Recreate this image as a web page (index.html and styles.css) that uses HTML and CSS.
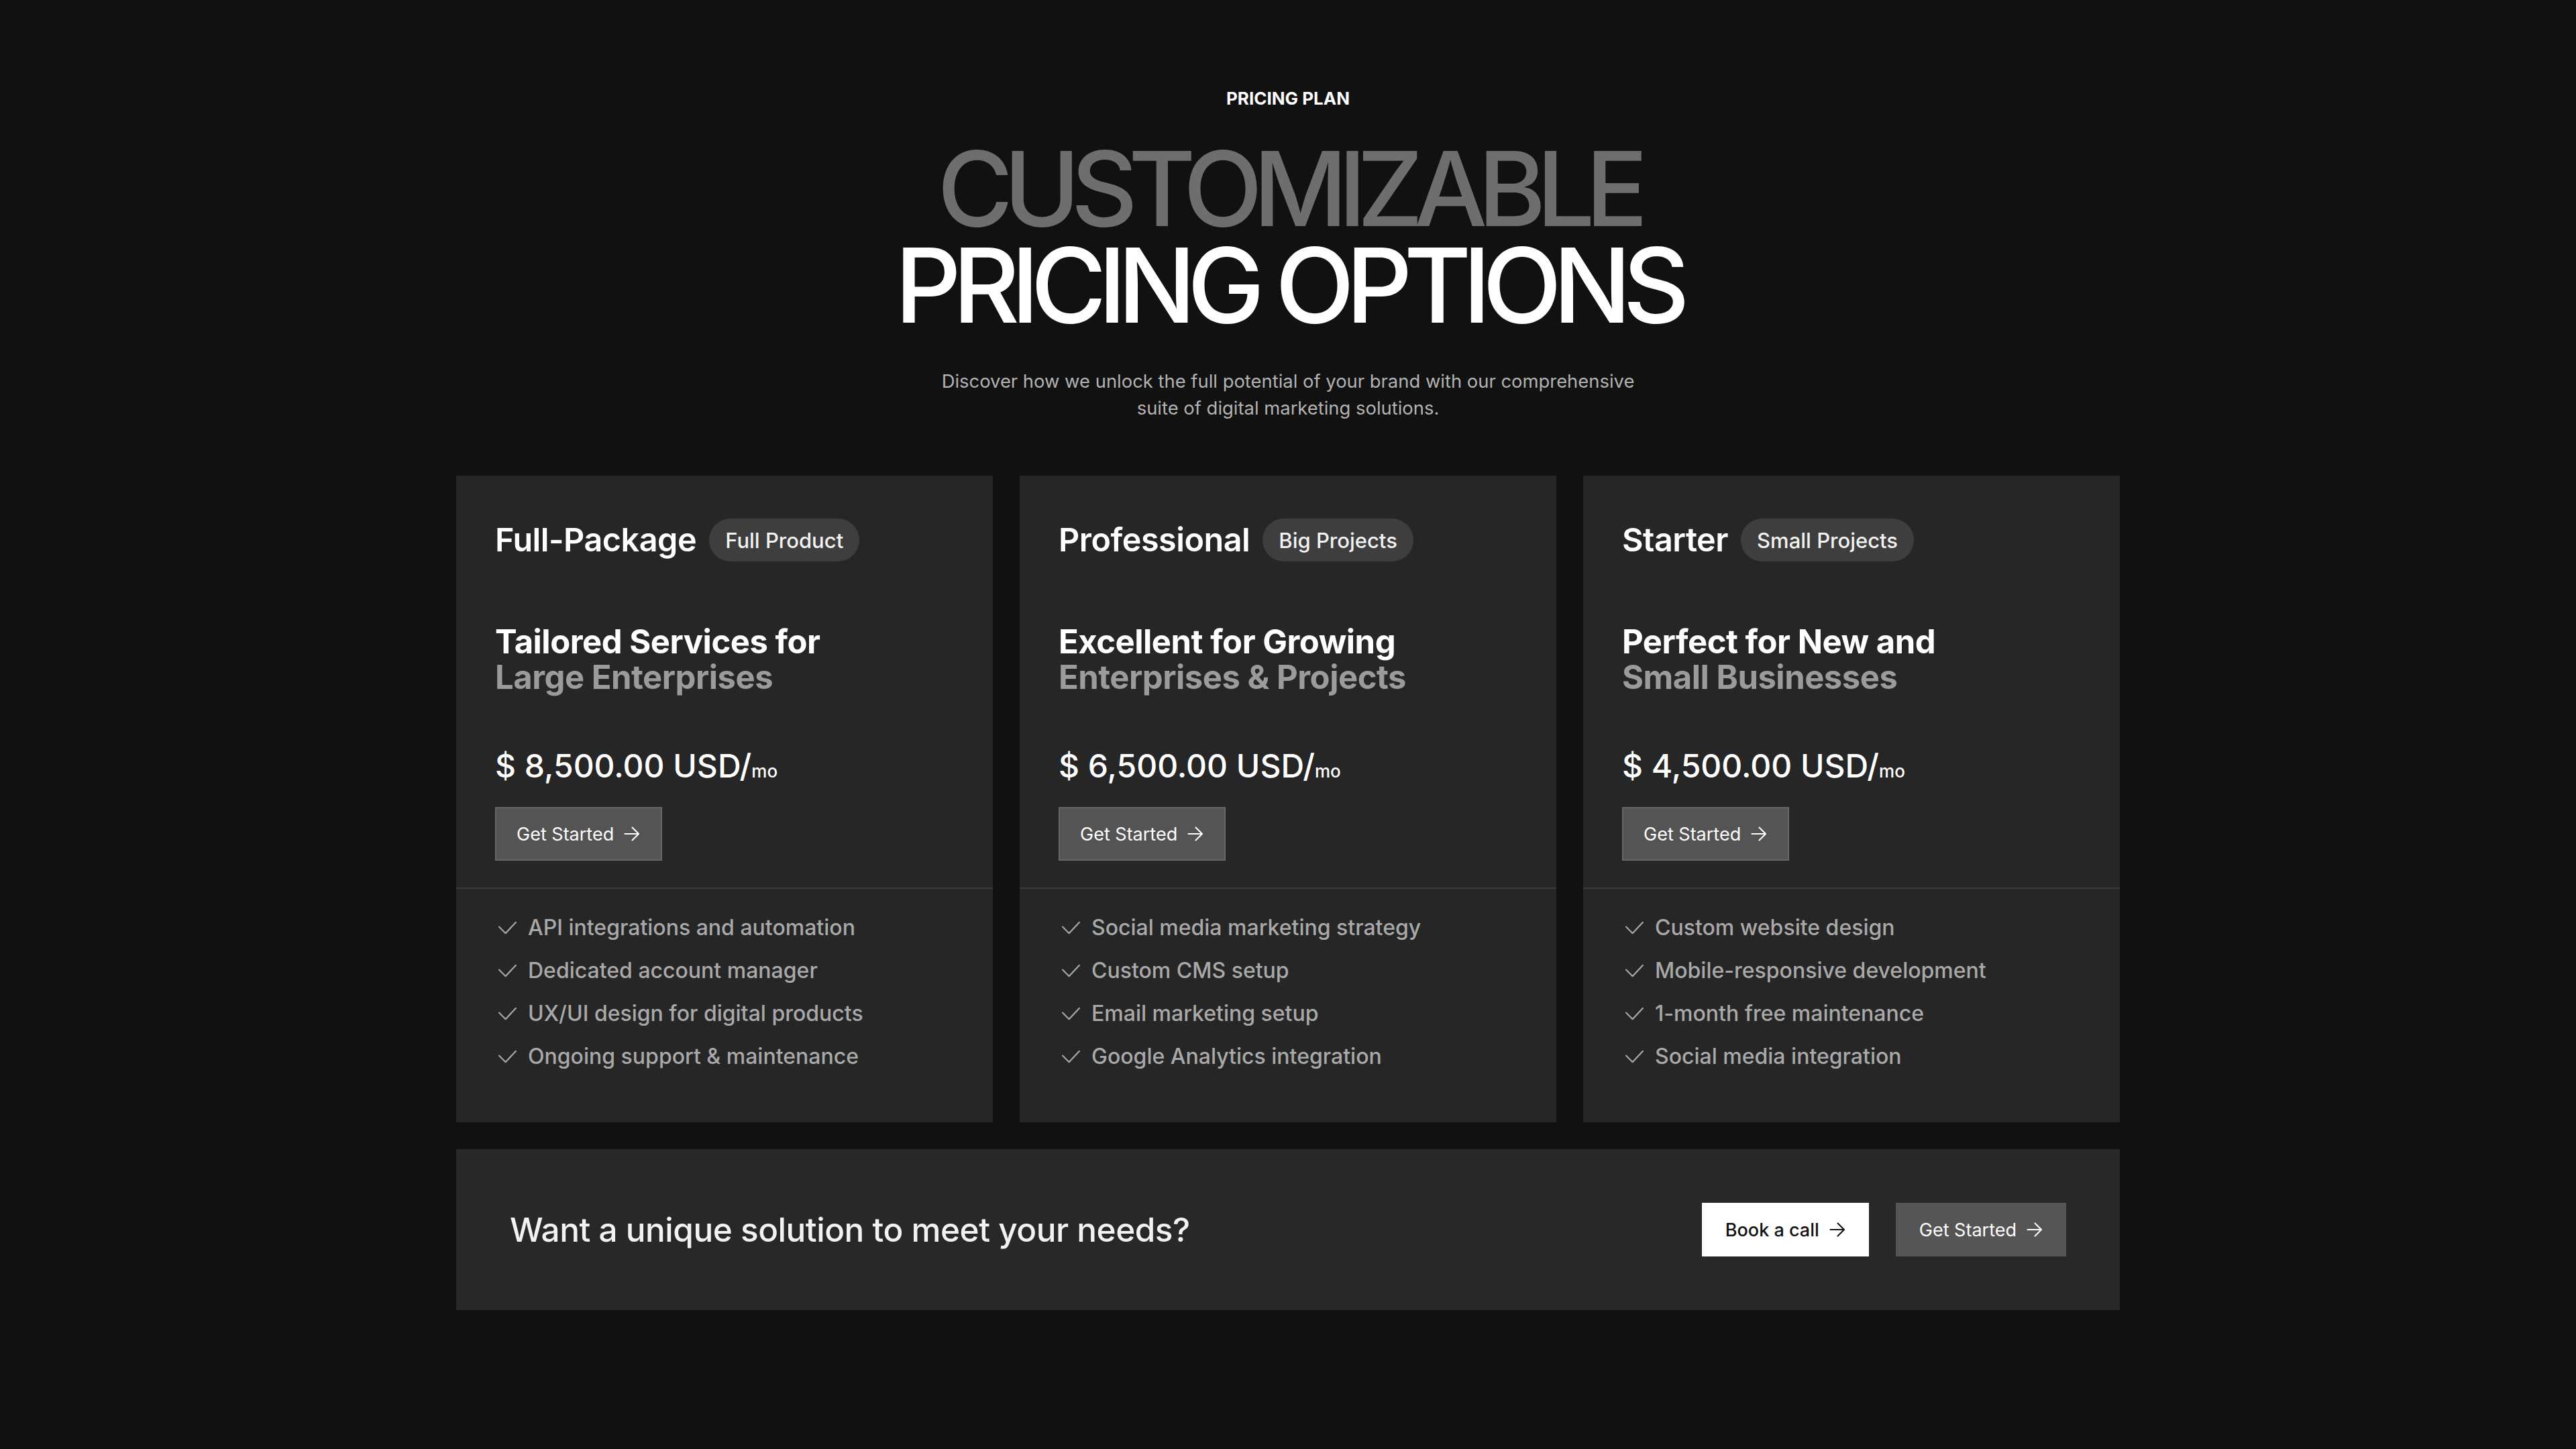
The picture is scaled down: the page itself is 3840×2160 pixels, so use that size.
FILE: index.html
```html
<!DOCTYPE html>
<html lang="en">
<head>
<meta charset="utf-8">
<title>Pricing Plan</title>
<link rel="stylesheet" href="styles.css">
</head>
<body>
<section class="pricing">
  <p class="eyebrow">PRICING PLAN</p>
  <h1 class="headline">
    <span class="headline-muted">CUSTOMIZABLE</span>
    <span class="headline-bright">PRICING OPTIONS</span>
  </h1>
  <p class="intro">Discover how we unlock the full potential of your brand with our comprehensive suite of digital marketing solutions.</p>

  <div class="plans">
    <article class="plan">
      <div class="plan-top">
        <div class="plan-head">
          <h2 class="plan-name">Full-Package</h2>
          <span class="plan-badge">Full Product</span>
        </div>
        <h3 class="plan-tagline">Tailored Services for<br><span class="muted">Large Enterprises</span></h3>
        <p class="plan-price">$ 8,500.00 USD/<span class="per">mo</span></p>
        <a class="btn btn-grey" href="#">Get Started <svg class="arrow" viewBox="0 0 24 24"><path d="M1.5 12H22M12.5 2.5L22 12l-9.5 9.5"/></svg></a>
      </div>
      <ul class="plan-features">
        <li><svg class="check" viewBox="0 0 28 20"><path d="M1 8.5l10 10L27 1.5"/></svg>API integrations and automation</li>
        <li><svg class="check" viewBox="0 0 28 20"><path d="M1 8.5l10 10L27 1.5"/></svg>Dedicated account manager</li>
        <li><svg class="check" viewBox="0 0 28 20"><path d="M1 8.5l10 10L27 1.5"/></svg>UX/UI design for digital products</li>
        <li><svg class="check" viewBox="0 0 28 20"><path d="M1 8.5l10 10L27 1.5"/></svg>Ongoing support &amp; maintenance</li>
      </ul>
    </article>

    <article class="plan">
      <div class="plan-top">
        <div class="plan-head">
          <h2 class="plan-name">Professional</h2>
          <span class="plan-badge">Big Projects</span>
        </div>
        <h3 class="plan-tagline">Excellent for Growing<br><span class="muted">Enterprises &amp; Projects</span></h3>
        <p class="plan-price">$ 6,500.00 USD/<span class="per">mo</span></p>
        <a class="btn btn-grey" href="#">Get Started <svg class="arrow" viewBox="0 0 24 24"><path d="M1.5 12H22M12.5 2.5L22 12l-9.5 9.5"/></svg></a>
      </div>
      <ul class="plan-features">
        <li><svg class="check" viewBox="0 0 28 20"><path d="M1 8.5l10 10L27 1.5"/></svg>Social media marketing strategy</li>
        <li><svg class="check" viewBox="0 0 28 20"><path d="M1 8.5l10 10L27 1.5"/></svg>Custom CMS setup</li>
        <li><svg class="check" viewBox="0 0 28 20"><path d="M1 8.5l10 10L27 1.5"/></svg>Email marketing setup</li>
        <li><svg class="check" viewBox="0 0 28 20"><path d="M1 8.5l10 10L27 1.5"/></svg>Google Analytics integration</li>
      </ul>
    </article>

    <article class="plan">
      <div class="plan-top">
        <div class="plan-head">
          <h2 class="plan-name">Starter</h2>
          <span class="plan-badge">Small Projects</span>
        </div>
        <h3 class="plan-tagline">Perfect for New and<br><span class="muted">Small Businesses</span></h3>
        <p class="plan-price">$ 4,500.00 USD/<span class="per">mo</span></p>
        <a class="btn btn-grey" href="#">Get Started <svg class="arrow" viewBox="0 0 24 24"><path d="M1.5 12H22M12.5 2.5L22 12l-9.5 9.5"/></svg></a>
      </div>
      <ul class="plan-features">
        <li><svg class="check" viewBox="0 0 28 20"><path d="M1 8.5l10 10L27 1.5"/></svg>Custom website design</li>
        <li><svg class="check" viewBox="0 0 28 20"><path d="M1 8.5l10 10L27 1.5"/></svg>Mobile-responsive development</li>
        <li><svg class="check" viewBox="0 0 28 20"><path d="M1 8.5l10 10L27 1.5"/></svg>1-month free maintenance</li>
        <li><svg class="check" viewBox="0 0 28 20"><path d="M1 8.5l10 10L27 1.5"/></svg>Social media integration</li>
      </ul>
    </article>
  </div>

  <div class="cta">
    <p class="cta-text">Want a unique solution to meet your needs?</p>
    <div class="cta-actions">
      <a class="btn btn-white" href="#">Book a call <svg class="arrow" viewBox="0 0 24 24"><path d="M1.5 12H22M12.5 2.5L22 12l-9.5 9.5"/></svg></a>
      <a class="btn btn-solid" href="#">Get Started <svg class="arrow" viewBox="0 0 24 24"><path d="M1.5 12H22M12.5 2.5L22 12l-9.5 9.5"/></svg></a>
    </div>
  </div>
</section>
</body>
</html>
```

FILE: styles.css
```css
* { box-sizing: border-box; }

html, body {
  margin: 0;
  padding: 0;
  background: #111111;
}

body {
  font-family: Inter, "Noto Sans", "Liberation Sans", sans-serif;
  color: #ffffff;
  min-height: 2160px;
}

.pricing {
  width: 2480px;
  margin: 0 auto;
  padding: 132px 0 0;
  display: flex;
  flex-direction: column;
  align-items: center;
}

.eyebrow {
  margin: 0;
  font-size: 26px;
  line-height: 29px;
  font-weight: 700;
  letter-spacing: 0;
  color: #ffffff;
}

.headline {
  margin: 48px 0 0;
  display: flex;
  flex-direction: column;
  align-items: center;
  font-size: 154px;
  line-height: 144px;
  font-weight: 500;
  letter-spacing: -0.09em;
}

.headline span {
  display: block;
  height: 144px;
}

.headline-muted { color: #6e6e6e; }
.headline-bright { color: #ffffff; letter-spacing: -0.082em; }

.intro {
  margin: 51px 0 0;
  max-width: 1060px;
  text-align: center;
  font-size: 27.4px;
  line-height: 40px;
  color: #b3b3b3;
}

.plans {
  margin-top: 81px;
  width: 100%;
  display: grid;
  grid-template-columns: repeat(3, 1fr);
  gap: 40px;
}

.plan {
  background: #262626;
  display: flex;
  flex-direction: column;
}

.plan-top {
  padding: 64px 58px 40px;
  border-bottom: 2px solid #3a3a3a;
  display: flex;
  flex-direction: column;
  align-items: flex-start;
}

.plan-head {
  display: flex;
  align-items: center;
  gap: 19px;
  height: 64px;
}

.plan-name {
  margin: 0;
  font-size: 48.5px;
  font-weight: 600;
  letter-spacing: -0.01em;
  line-height: 58px;
}

.plan-badge {
  display: inline-flex;
  align-items: center;
  height: 64px;
  padding: 0 24px;
  border-radius: 32px;
  background: #3e3e3e;
  color: #f2f2f2;
  font-size: 31px;
  font-weight: 500;
}

.plan-tagline {
  margin: 93px 0 0;
  font-size: 49px;
  line-height: 53px;
  font-weight: 650;
  letter-spacing: -0.01em;
  color: #ffffff;
}

.plan-tagline .muted { color: #9b9b9b; }

.plan-price {
  margin: 77px 0 0;
  font-size: 48px;
  line-height: 58px;
  font-weight: 500;
  color: #ffffff;
}

.plan-price .per {
  font-size: 26px;
  font-weight: 500;
}

.btn {
  display: inline-flex;
  align-items: center;
  gap: 15px;
  height: 80px;
  padding: 0 35px;
  font-size: 27px;
  font-weight: 400;
  text-decoration: none;
  white-space: nowrap;
}

.btn .arrow {
  width: 24px;
  height: 24px;
  fill: none;
  stroke: currentColor;
  stroke-width: 2.1;
  stroke-linecap: round;
  stroke-linejoin: round;
}

.btn-grey {
  margin-top: 24px;
  background: #545454;
  border: 2px solid #676767;
  color: #ffffff;
  padding: 0 31px 0 30px;
}

.plan-features {
  list-style: none;
  margin: 0;
  padding: 34px 58px 74px 63px;
  display: flex;
  flex-direction: column;
  gap: 16px;
}

.plan-features li {
  display: flex;
  align-items: center;
  gap: 17px;
  font-size: 32px;
  line-height: 48px;
  font-weight: 500;
  color: #a9a9a9;
}

.check {
  width: 27px;
  height: 20px;
  flex: none;
  fill: none;
  stroke: #a9a9a9;
  stroke-width: 2.2;
  stroke-linecap: round;
  stroke-linejoin: round;
}

.cta {
  margin-top: 40px;
  width: 100%;
  height: 240px;
  background: #282828;
  padding: 0 80px;
  display: flex;
  align-items: center;
  justify-content: space-between;
}

.cta-text {
  margin: 0;
  font-size: 49.5px;
  font-weight: 500;
  letter-spacing: -0.01em;
  color: #f2f2f2;
}

.cta-actions {
  display: flex;
  gap: 40px;
}

.btn-white {
  background: #ffffff;
  color: #111111;
  font-weight: 500;
}

.btn-solid {
  background: #555555;
  color: #ffffff;
}
```
